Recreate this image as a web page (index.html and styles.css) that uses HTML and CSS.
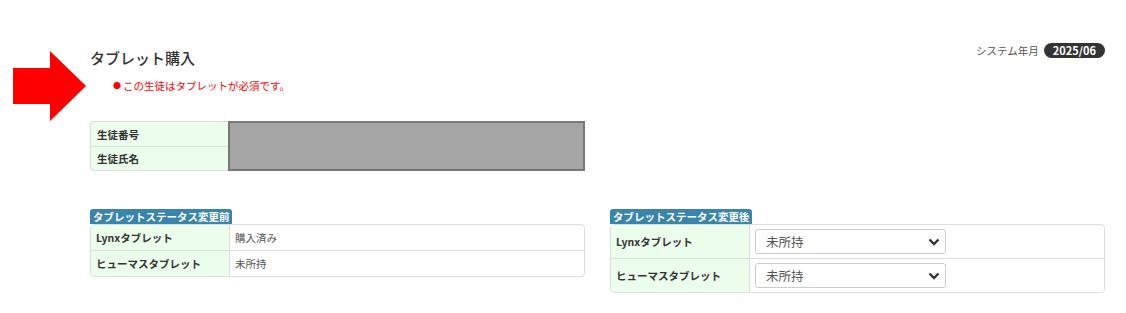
FILE: index.html
```html
<!DOCTYPE html>
<html lang="ja">
<head>
  <meta charset="UTF-8">
  <title>タブレット購入</title>
  <link rel="stylesheet" href="styles.css">
</head>
<body>

  <div class="page">
    <div class="gutter">
      <svg class="arrow" width="76" height="72" viewBox="0 0 76 72">
        <polygon points="0,17 37,17 37,0 73,35 37,70 37,53 0,53" fill="#ff0000"/>
      </svg>
    </div>

    <div class="main">
      <div class="header">
        <div>
          <h2 class="title">タブレット購入</h2>
          <p class="notice"><span class="dot">●</span>この生徒はタブレットが必須です。</p>
        </div>
        <div class="sysdate">
          <span>システム年月</span>
          <span class="pill">2025/06</span>
        </div>
      </div>

      <div class="info">
        <div class="label">生徒番号</div>
        <div class="mask"></div>
        <div class="label last">生徒氏名</div>
      </div>

      <div class="status-wrap">
        <div class="status">
          <div class="caption">タブレットステータス変更前</div>
          <div class="box">
            <div class="row">
              <div class="label">Lynxタブレット</div>
              <div class="value">購入済み</div>
            </div>
            <div class="row">
              <div class="label">ヒューマスタブレット</div>
              <div class="value">未所持</div>
            </div>
          </div>
        </div>

        <div class="status">
          <div class="caption">タブレットステータス変更後</div>
          <div class="box tall">
            <div class="row">
              <div class="label">Lynxタブレット</div>
              <div class="value">
                <span class="select-wrap">
                  <select>
                    <option>未所持</option>
                    <option>購入済み</option>
                  </select>
                  <svg class="chev" width="12" height="8" viewBox="0 0 12 8"><path d="M1.5 1.5 L6 6 L10.5 1.5" fill="none" stroke="#333" stroke-width="2.4"/></svg>
                </span>
              </div>
            </div>
            <div class="row">
              <div class="label">ヒューマスタブレット</div>
              <div class="value">
                <span class="select-wrap">
                  <select>
                    <option>未所持</option>
                    <option>購入済み</option>
                  </select>
                  <svg class="chev" width="12" height="8" viewBox="0 0 12 8"><path d="M1.5 1.5 L6 6 L10.5 1.5" fill="none" stroke="#333" stroke-width="2.4"/></svg>
                </span>
              </div>
            </div>
          </div>
        </div>
      </div>
    </div>
  </div>

</body>
</html>
```

FILE: styles.css
```css
body {
  margin: 0;
  font-family: "Noto Sans CJK JP", "Noto Sans", sans-serif;
  color: #333;
  background: #fff;
}

.page {
  display: grid;
  grid-template-columns: 90px 1fr;
  padding: 46px 21px 0 0;
}

.arrow {
  display: block;
  margin: 5px 0 0 13px;
}

.header {
  display: flex;
  justify-content: space-between;
  align-items: flex-start;
}

.title {
  margin: 0;
  font-size: 15px;
  line-height: 24px;
  font-weight: 500;
  color: #333;
}

.notice {
  margin: 8px 0 0 23px;
  font-size: 10.5px;
  line-height: 16px;
  color: #ff0000;
}

.dot {
  font-size: 8px;
  margin-right: 2px;
  vertical-align: 1px;
}

.sysdate {
  display: flex;
  align-items: center;
  gap: 5px;
  margin-top: -3px;
  font-size: 10.5px;
  color: #555;
}

.pill {
  background: #333;
  color: #fff;
  font-weight: bold;
  font-size: 11px;
  line-height: 15px;
  padding: 0 9px;
  border-radius: 8px;
}

.info {
  display: grid;
  grid-template-columns: 138px 1fr;
  grid-template-rows: 25px 25px;
  width: 495px;
  margin-top: 27px;
}

.info .label {
  display: flex;
  align-items: center;
  padding-left: 6px;
  background: #ebfdeb;
  border: 1px solid #ddd;
  border-right: none;
  border-bottom: none;
  font-size: 10.5px;
  font-weight: bold;
}

.info .label:first-child {
  border-top-left-radius: 4px;
}

.info .label.last {
  border-bottom: 1px solid #ddd;
  border-bottom-left-radius: 4px;
}

.mask {
  grid-row: 1 / span 2;
  grid-column: 2;
  background: #a5a5a5;
  border: 2px solid #777;
}

.status-wrap {
  display: grid;
  grid-template-columns: 495px 495px;
  column-gap: 25px;
  margin-top: 38px;
  align-items: start;
}

.caption {
  width: fit-content;
  background: #3a85ab;
  color: #fff;
  font-size: 10.5px;
  font-weight: bold;
  line-height: 15px;
  padding: 0 2px 0 3px;
  border-radius: 3px 3px 0 0;
}

.box {
  border: 1px solid #ddd;
  border-radius: 4px;
  overflow: hidden;
}

.row {
  display: grid;
  grid-template-columns: 139px 1fr;
  height: 25px;
}

.row + .row {
  border-top: 1px solid #ddd;
}

.box.tall .row {
  height: 33px;
}

.row .label {
  display: flex;
  align-items: center;
  padding-left: 5px;
  background: #ebfdeb;
  border-right: 1px solid #ddd;
  font-size: 10.5px;
  font-weight: bold;
}

.row .value {
  display: flex;
  align-items: center;
  padding-left: 5px;
  font-size: 10.5px;
  color: #555;
}

.select-wrap {
  position: relative;
  display: inline-block;
}

select {
  appearance: none;
  width: 191px;
  height: 25px;
  padding: 0 0 0 10px;
  border: 1px solid #ccc;
  border-radius: 3px;
  background: #fff;
  font-family: "Noto Sans CJK JP", sans-serif;
  font-size: 12.5px;
  color: #555;
}

.chev {
  position: absolute;
  right: 6px;
  top: 9px;
  pointer-events: none;
}
```
